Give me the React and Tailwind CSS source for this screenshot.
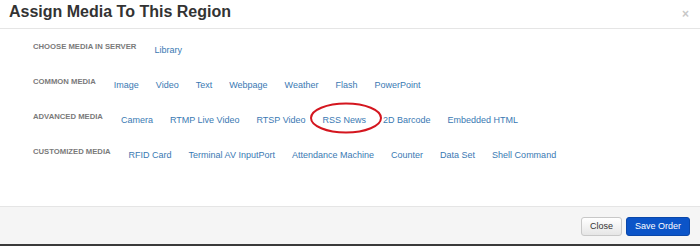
const rows = [
  { label: "CHOOSE MEDIA IN SERVER", items: ["Library"] },
  { label: "COMMON MEDIA", items: ["Image", "Video", "Text", "Webpage", "Weather", "Flash", "PowerPoint"] },
  { label: "ADVANCED MEDIA", items: ["Camera", "RTMP Live Video", "RTSP Video", "RSS News", "2D Barcode", "Embedded HTML"] },
  { label: "CUSTOMIZED MEDIA", items: ["RFID Card", "Terminal AV InputPort", "Attendance Machine", "Counter", "Data Set", "Shell Command"] },
];

function MediaRow({ label, items }) {
  return (
    <div className="flex items-start h-[35px]">
      <span className="text-[7.7px] leading-[10px] font-bold text-[#7a7a7a] mr-[18px]">{label}</span>
      <div className="flex gap-[17px] pt-[2px]">
        {items.map((item) => (
          <a key={item} href="#" className="text-[9px] leading-[12px] text-[#3a79b3]">
            {item}
          </a>
        ))}
      </div>
    </div>
  );
}

export default function App() {
  return (
    <div className="w-[700px] h-[246px] bg-[#3a3a3a] font-['Liberation_Sans',Arial,sans-serif]">
      <div className="relative w-[700px] h-[244px] bg-white flex flex-col">
        {/* header */}
        <div className="flex items-start justify-between h-[29px] border-b border-[#e5e5e5] pl-[9px] pr-[11px] pt-[2px]">
          <h2 className="text-[16px] leading-[20px] font-bold text-[#333]">Assign Media To This Region</h2>
          <span className="text-[12px] leading-[12px] font-bold text-[#c8c8c8] mt-[6px]">×</span>
        </div>

        {/* body */}
        <div className="flex-1 pl-[33px] pt-[13px]">
          {rows.map((row) => (
            <MediaRow key={row.label} {...row} />
          ))}
        </div>

        {/* footer */}
        <div className="h-[38px] border-t border-[#e5e5e5] bg-[#f5f5f5] flex justify-end items-start gap-[4px] pt-[10px] pr-[10px]">
          <button className="h-[19px] px-[8px] text-[9px] text-[#333] rounded-[3px] border border-[#c8c8c8] bg-gradient-to-b from-white to-[#e6e6e6]">
            Close
          </button>
          <button className="h-[19px] px-[8px] text-[9px] text-white rounded-[3px] border border-[#0a47a9] bg-[#0b54c8]">
            Save Order
          </button>
        </div>

        {/* red highlight ellipse */}
        <svg className="absolute left-[309px] top-[101px] pointer-events-none" width="74" height="34" viewBox="0 0 74 34">
          <ellipse cx="37" cy="17" rx="35" ry="14.5" fill="none" stroke="#d4161f" strokeWidth="2" />
        </svg>
      </div>
    </div>
  );
}
